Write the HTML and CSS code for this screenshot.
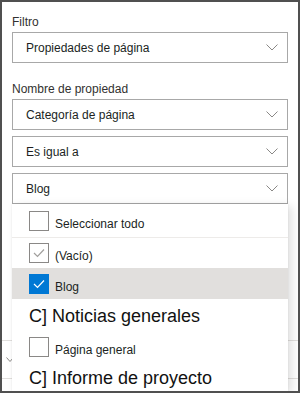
FILE: index.html
```html
<!DOCTYPE html>
<html lang="es">
<head>
  <meta charset="UTF-8" />
  <meta name="viewport" content="width=device-width, initial-scale=1.0"/>
  <title>Filtro</title>
  <link rel="stylesheet" href="styles.css">
</head>
<body>
  <div class="pane">
    <div class="field-label">Filtro</div>
    <div class="dropdown first">
      <span class="dropdown-text">Propiedades de página</span>
      <svg class="chevron" width="12" height="7" viewBox="0 0 12 7"><polyline points="0.5,0.5 6,6 11.5,0.5" /></svg>
    </div>

    <div class="field-label">Nombre de propiedad</div>
    <div class="dropdown">
      <span class="dropdown-text">Categoría de página</span>
      <svg class="chevron" width="12" height="7" viewBox="0 0 12 7"><polyline points="0.5,0.5 6,6 11.5,0.5" /></svg>
    </div>
    <div class="dropdown">
      <span class="dropdown-text">Es igual a</span>
      <svg class="chevron" width="12" height="7" viewBox="0 0 12 7"><polyline points="0.5,0.5 6,6 11.5,0.5" /></svg>
    </div>

    <div class="dropdown-wrap">
      <div class="dropdown open">
        <span class="dropdown-text">Blog</span>
        <svg class="chevron" width="12" height="7" viewBox="0 0 12 7"><polyline points="0.5,0.5 6,6 11.5,0.5" /></svg>
      </div>

      <div class="callout">
        <div class="opt row-a">
          <span class="box"></span>
          <span class="opt-text">Seleccionar todo</span>
        </div>
        <div class="divider"></div>
        <div class="opt row-b">
          <span class="box dim">
            <svg width="12" height="10" viewBox="0 0 12 10"><polyline points="1,5 4.5,8.5 11,1.5" /></svg>
          </span>
          <span class="opt-text">(Vacío)</span>
        </div>
        <div class="opt row-c selected">
          <span class="box checked">
            <svg width="12" height="10" viewBox="0 0 12 10"><polyline points="1,5 4.5,8.5 11,1.5" /></svg>
          </span>
          <span class="opt-text">Blog</span>
        </div>
        <div class="opt row-d big">C] Noticias generales</div>
        <div class="opt row-e">
          <span class="box"></span>
          <span class="opt-text">Página general</span>
        </div>
        <div class="opt row-f big">C] Informe de proyecto</div>
      </div>
    </div>

    <div class="behind">
      <div class="behind-row">
        <svg class="small-chevron" width="8" height="5" viewBox="0 0 8 5"><polyline points="0.5,0.5 4,4.5 7.5,0.5" /></svg>
      </div>
      <div class="behind-row last"></div>
    </div>
  </div>
</body>
</html>
```

FILE: styles.css
```css
html, body {
  margin: 0;
  padding: 0;
}

body {
  width: 300px;
  height: 393px;
  box-sizing: border-box;
  border: 2px solid #505050;
  background: white;
  overflow: hidden;
  font-family: "Liberation Sans", Arial, sans-serif;
  color: #323130;
}

.pane {
  padding: 10px 10px 0 10px;
}

.field-label {
  font-size: 12px;
  line-height: 20px;
  color: #323130;
}

.dropdown {
  height: 31px;
  box-sizing: border-box;
  border: 1px solid #a8a8a8;
  display: flex;
  align-items: center;
  justify-content: space-between;
  padding: 0 9px 0 13px;
  margin-bottom: 6px;
}

.dropdown.first {
  margin-bottom: 16px;
}

.dropdown.open {
  margin-bottom: 0;
}

.dropdown-text {
  font-size: 12px;
  color: #201f1e;
  padding-top: 1px;
}

.chevron polyline,
.small-chevron polyline {
  fill: none;
  stroke: #8a8886;
  stroke-width: 1;
}

.dropdown-wrap {
  position: relative;
}

.callout {
  position: absolute;
  top: 100%;
  left: 0;
  width: 100%;
  height: 187px;
  overflow: hidden;
  background: white;
  z-index: 10;
  box-shadow: 4px 2px 9px rgba(0, 0, 0, 0.12), 0 0 2px rgba(0, 0, 0, 0.08);
}

.opt {
  display: flex;
  align-items: center;
  gap: 6px;
  padding: 0 17px;
  box-sizing: border-box;
  flex: none;
}

.row-a { height: 33px; }
.row-b { height: 30px; }
.row-c { height: 31px; }
.row-d { height: 35px; }
.row-e { height: 26px; }
.row-f { height: 36px; }

.divider {
  height: 1px;
  background: #edebe9;
}

.selected {
  background: #e1dfdd;
}

.opt-text {
  font-size: 12px;
  line-height: 16px;
  color: #201f1e;
  padding-top: 6px;
}

.big {
  font-size: 18px;
  color: #111;
}

.box {
  width: 20px;
  height: 20px;
  box-sizing: border-box;
  border: 1px solid #8a8886;
  background: white;
  display: flex;
  align-items: center;
  justify-content: center;
  flex: none;
}

.box svg polyline {
  fill: none;
  stroke-width: 1.2;
}

.box.dim svg polyline {
  stroke: #a19f9d;
}

.box.checked {
  background: #0078d4;
  border-color: #0078d4;
}

.box.checked svg polyline {
  stroke: white;
}

.behind {
  margin: 136px -10px 0 -10px;
}

.behind-row {
  height: 37px;
  border-top: 1px solid #e1dfdd;
  display: flex;
  align-items: center;
  padding-left: 4px;
}

.behind-row.last {
  height: 12px;
}
```
